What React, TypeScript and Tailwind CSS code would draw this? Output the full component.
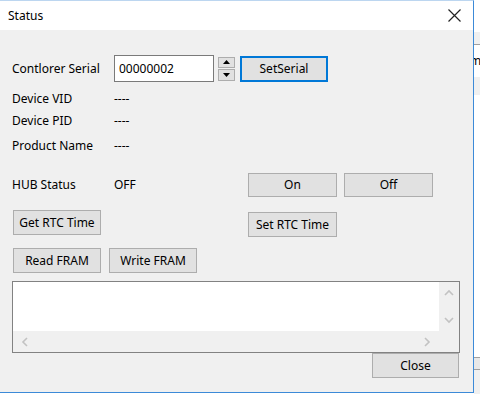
import React from "react";

const font = { fontFamily: '"Noto Sans", "Liberation Sans", Arial, sans-serif' };

function Btn({ children, className = "" }: { children: React.ReactNode; className?: string }) {
  return (
    <div
      className={
        "flex items-center justify-center border border-[#adadad] bg-[#e1e1e1] text-[12px] leading-none text-black " +
        className
      }
    >
      {children}
    </div>
  );
}

function Chevron({ d }: { d: string }) {
  return (
    <svg width="10" height="10" viewBox="0 0 10 10">
      <path d={d} fill="none" stroke="#c2c2c2" strokeWidth="1.6" />
    </svg>
  );
}

export default function App() {
  return (
    <div className="flex h-[394px] w-[480px] overflow-hidden bg-white" style={font}>
      {/* Dialog */}
      <div className="flex h-[393px] w-[474px] shrink-0 flex-col border-r border-b border-t border-r-[#3c8ad8] border-b-[#3c8ad8] border-t-[#bcd6f0] bg-[#f0f0f0]">
        {/* Title bar */}
        <div className="flex h-[29px] shrink-0 items-center justify-between bg-white pl-[8px] pr-[12px]">
          <span className="text-[12px] text-black">Status</span>
          <svg width="13" height="13" viewBox="0 0 13 13">
            <path d="M0.5 0.5 L12.5 12.5 M12.5 0.5 L0.5 12.5" stroke="#222" strokeWidth="1.2" />
          </svg>
        </div>

        <div className="flex flex-col pl-[12px] text-[12px] text-black">
          {/* Serial row */}
          <div className="mt-[25px] flex h-[27px] items-center">
            <span className="w-[102px]">Contlorer Serial</span>
            <div className="flex h-[27px] w-[100px] items-center border border-[#7a7a7a] bg-white pl-[4px]">
              00000002
            </div>
            <div className="ml-[4px] flex h-[24px] w-[17px] flex-col gap-[1px]">
              <div className="flex h-[11px] items-center justify-center border border-[#adadad] bg-[#e1e1e1]">
                <svg width="7" height="4" viewBox="0 0 7 4">
                  <path d="M0 4 L3.5 0 L7 4 Z" fill="#000" />
                </svg>
              </div>
              <div className="flex h-[12px] items-center justify-center border border-[#adadad] bg-[#e1e1e1]">
                <svg width="7" height="4" viewBox="0 0 7 4">
                  <path d="M0 0 L3.5 4 L7 0 Z" fill="#000" />
                </svg>
              </div>
            </div>
            <div className="ml-[5px] flex h-[26px] w-[88px] items-center justify-center border-2 border-[#0078d7] bg-[#e1e1e1]">
              SetSerial
            </div>
          </div>

          {/* Device VID */}
          <div className="mt-[9px] flex h-[16px] items-center">
            <span className="w-[102px]">Device VID</span>
            <span>----</span>
          </div>
          <div className="mt-[6px] flex h-[16px] items-center">
            <span className="w-[102px]">Device PID</span>
            <span>----</span>
          </div>
          <div className="mt-[9px] flex h-[16px] items-center">
            <span className="w-[102px]">Product Name</span>
            <span>----</span>
          </div>

          {/* HUB status */}
          <div className="mt-[19px] flex h-[24px] items-center">
            <span className="w-[102px]">HUB Status</span>
            <span className="w-[134px]">OFF</span>
            <Btn className="h-[24px] w-[89px]">On</Btn>
            <Btn className="ml-[7px] h-[24px] w-[89px]">Off</Btn>
          </div>

          {/* RTC row */}
          <div className="mt-[13px] flex h-[27px] items-start">
            <Btn className="ml-[1px] h-[25px] w-[88px]">Get RTC Time</Btn>
            <Btn className="ml-[147px] mt-[2px] h-[25px] w-[89px]">Set RTC Time</Btn>
          </div>

          {/* FRAM row */}
          <div className="mt-[11px] flex h-[25px] items-start">
            <Btn className="ml-[1px] h-[25px] w-[88px]">Read FRAM</Btn>
            <Btn className="ml-[8px] h-[25px] w-[88px]">Write FRAM</Btn>
          </div>

          {/* Text area */}
          <div className="mt-[8px] flex h-[72px] w-[448px] flex-col border border-[#828282] bg-[#f0f0f0]">
            <div className="flex h-[49px]">
              <div className="w-[426px] bg-white" />
              <div className="flex flex-1 flex-col items-center justify-between py-[6px]">
                <Chevron d="M1 7 L5 3 L9 7" />
                <Chevron d="M1 3 L5 7 L9 3" />
              </div>
            </div>
            <div className="flex h-[21px] w-[426px] items-center justify-between px-[7px]">
              <Chevron d="M7 1 L3 5 L7 9" />
              <Chevron d="M3 1 L7 5 L3 9" />
            </div>
          </div>

          {/* Close */}
          <div className="flex w-[447px] justify-end">
            <Btn className="h-[25px] w-[87px]">Close</Btn>
          </div>
        </div>
      </div>

      {/* Background window strip */}
      <div className="flex h-[394px] flex-1 flex-col bg-white">
        <div className="h-[32px] bg-white" />
        <div className="h-[12px] bg-[#f0f0f0]" />
        <div className="h-[1px] bg-[#a0a0a0]" />
        <div className="flex h-[32px] items-center overflow-hidden text-[12px] text-black">
          <span className="-ml-[4px]">m</span>
        </div>
        <div className="h-[18px] bg-[#f0f0f0]" />
        <div className="h-[262px] bg-white" />
        <div className="h-[1px] bg-[#a0a0a0]" />
        <div className="h-[11px] bg-[#e8e8e8]" />
        <div className="h-[1px] bg-[#a0a0a0]" />
        <div className="flex-1 bg-[#f0f0f0]" />
      </div>
    </div>
  );
}
